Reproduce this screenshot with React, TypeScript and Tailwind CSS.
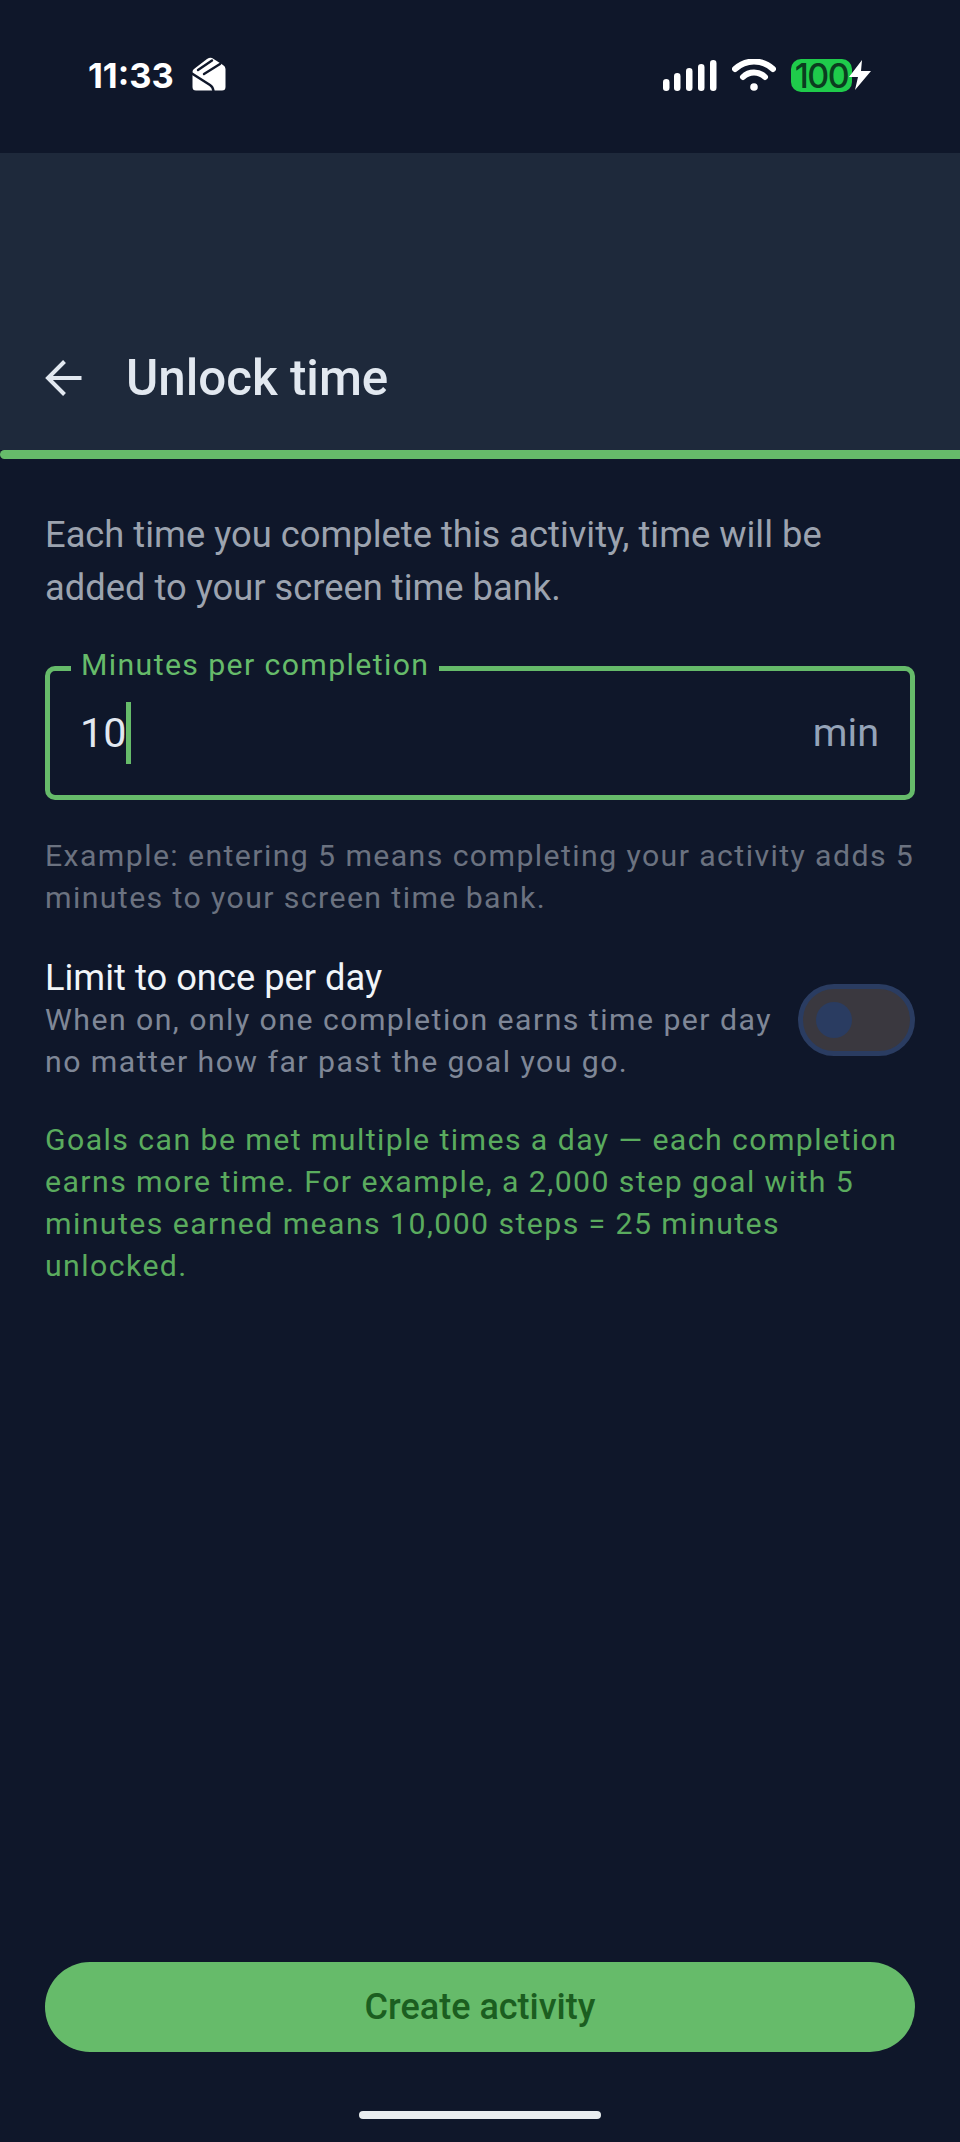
function MailStackIcon() {
  return (
    <svg width="34" height="34" viewBox="0 0 34 34" className="ml-[18px]">
      <path d="M0.5 15 Q0.5 13 2 12 L15 2 Q18 0 20 1 L24 3.5 L31 8 Q33.5 9.5 33.5 12 L33.5 30 Q33.5 33.5 30 33.5 L4 33.5 Q0.5 33.5 0.5 30 Z" fill="#fff" />
      <g stroke="#0f172a" strokeWidth="2.4" fill="none" strokeLinecap="round">
        <path d="M6 13 L20 3.5" />
        <path d="M12 17 L28 7" />
        <path d="M0 16.5 L18 28 Q21 30 21.5 34" />
      </g>
    </svg>
  )
}

function SignalIcon() {
  const bars = [
    { x: 0, h: 12 },
    { x: 11, h: 18 },
    { x: 23, h: 23 },
    { x: 35, h: 27 },
    { x: 47, h: 31 },
  ]
  return (
    <svg width="54" height="31" viewBox="0 0 54 31">
      {bars.map((b) => (
        <rect key={b.x} x={b.x} y={31 - b.h} width="6.5" height={b.h} rx="3.2" fill="#fff" />
      ))}
    </svg>
  )
}

function WifiIcon() {
  return (
    <svg width="44" height="32" viewBox="0 0 44 32" fill="none" stroke="#fff" strokeLinecap="round">
      <path d="M3 10 C14 0 30 0 41 10" strokeWidth="6" />
      <path d="M11 18 C17 12 27 12 33 18" strokeWidth="6" />
      <circle cx="22" cy="28" r="3.8" fill="#fff" stroke="none" />
    </svg>
  )
}

function StatusBar() {
  return (
    <div className="h-[153px] flex items-start pt-[57px] pl-[88px] pr-[88px]">
      <span className="text-[34.5px] leading-[38px] font-bold text-white font-['Inter',sans-serif]">11:33</span>
      <MailStackIcon />
      <div className="flex-1" />
      <div className="flex items-center h-[38px] mt-[-1px]">
        <SignalIcon />
        <div className="ml-[15px]">
          <WifiIcon />
        </div>
        <div className="ml-[15px] h-[33px] w-[61px] rounded-[10px] bg-[#1fcb4b] flex items-center justify-center text-[34px] font-medium text-[#0b3d1f] tracking-[-1.5px] font-['Inter',sans-serif]">
          100
        </div>
        <svg width="24" height="30" viewBox="0 0 24 30" className="ml-[-4px]">
          <path d="M14 0 L1 17 L10 17 L7 30 L23 11 L13 11 Z" fill="#fff" />
        </svg>
      </div>
    </div>
  )
}

export default function App() {
  return (
    <div className="w-[960px] h-[2142px] flex flex-col bg-[#0f172a] font-['Roboto',sans-serif] overflow-hidden">
      <StatusBar />

      {/* Header */}
      <div className="h-[297px] bg-[#1e293b] flex items-end pb-[47px] pl-[45px]">
        <div className="flex items-center h-[50px]">
          <svg width="37" height="36" viewBox="0 0 37 36" fill="none" stroke="#e2e8f0" strokeWidth="4">
            <path d="M36.5 18 H3" />
            <path d="M19.5 1.5 L3 18 L19.5 34.5" />
          </svg>
          <h1 className="ml-[44px] text-[49.3px] leading-[50px] font-medium text-[#e2e8f0]">Unlock time</h1>
        </div>
      </div>
      <div className="h-[9px] bg-[#66bb6a] rounded-l-full" />

      <div className="flex-1 flex flex-col px-[45px]">
        <p className="mt-[49px] text-[36.3px] leading-[53px] text-[#9ca3af]">
          Each time you complete this activity, time will be added to your screen time bank.
        </p>

        {/* Minutes field */}
        <div className="relative mt-[52px] h-[134px] border-[5px] border-[#66bb6a] rounded-[10px] flex items-center justify-between pl-[30px] pr-[31px]">
          <span className="absolute left-[21px] top-[-24px] px-[10px] bg-[#0f172a] text-[30.25px] leading-[36px] tracking-[1.375px] text-[#66bb6a]">
            Minutes per completion
          </span>
          <div className="flex items-center">
            <span className="text-[41.25px] leading-[48px] text-[#e2e8f0]">10</span>
            <span className="w-[5px] h-[62px] bg-[#66bb6a]" />
          </div>
          <span className="text-[39.6px] leading-[48px] text-[#94a3b8]">min</span>
        </div>

        <p className="mt-[35px] text-[30.25px] leading-[42px] tracking-[1.4px] text-[#6b7280]">
          Example: entering 5 means completing your activity adds 5 minutes to your screen time bank.
        </p>

        {/* Once per day toggle */}
        <div className="mt-[38px] flex items-center justify-between">
          <div className="w-[750px]">
            <div className="text-[36.3px] leading-[42px] text-[#f1f5f9]">Limit to once per day</div>
            <p className="text-[30.25px] leading-[42px] tracking-[1.45px] text-[#7f8797]">
              When on, only one completion earns time per day no matter how far past the goal you go.
            </p>
          </div>
          <div className="w-[117px] h-[72px] rounded-full border-[5px] border-[#2a3c61] bg-[#3a383f] flex items-center pl-[13px]">
            <div className="w-[36px] h-[36px] rounded-full bg-[#2a3c61]" />
          </div>
        </div>

        <p className="mt-[36px] text-[30.25px] leading-[42px] tracking-[1.42px] text-[#5aab5e]">
          Goals can be met multiple times a day — each completion earns more time. For example, a 2,000 step goal with 5 minutes earned means 10,000 steps = 25 minutes unlocked.
        </p>

        <div className="flex-1" />

        <button className="h-[90px] w-full rounded-full bg-[#66bb6a] text-[36px] font-medium text-[#1b5e20]">
          Create activity
        </button>

        <div className="h-[90px] flex items-start justify-center pt-[59px]">
          <div className="w-[242px] h-[8px] rounded-full bg-[#e9edef]" />
        </div>
      </div>
    </div>
  )
}
